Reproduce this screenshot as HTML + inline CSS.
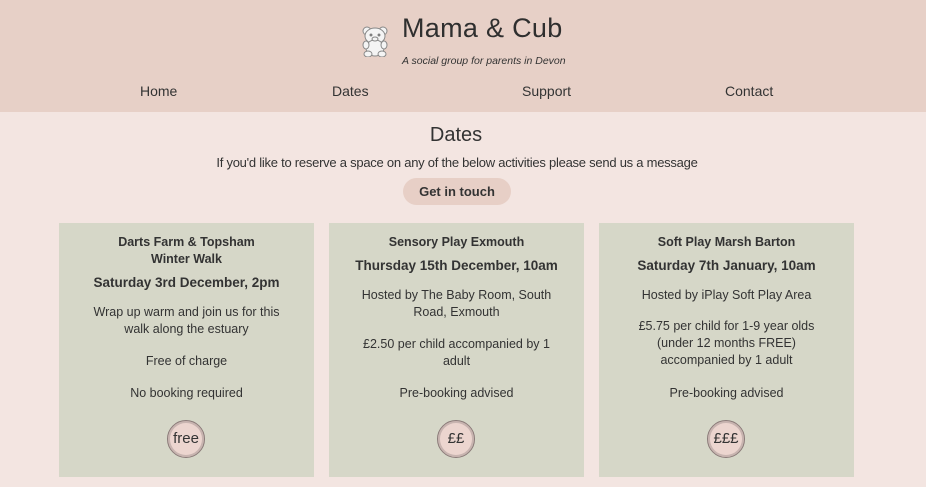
<!DOCTYPE html>
<html><head><meta charset="utf-8"><style>
*{margin:0;padding:0;box-sizing:border-box}
body{width:926px;height:487px;overflow:hidden;background:#f3e5e1;font-family:"Liberation Sans","DejaVu Sans",sans-serif;color:#333;position:relative}
.hdr{position:absolute;left:0;top:0;width:926px;height:112px;background:#e7d0c7}
.title{position:absolute;left:402px;top:13px;font-size:27px;color:#2f2f2f;font-family:"Liberation Sans",sans-serif;letter-spacing:0.3px}
.sub{position:absolute;left:402px;top:55px;font-size:10.5px;font-style:italic;color:#333}
.nav{position:absolute;top:83px;font-size:14px;color:#333}
.t{position:absolute;left:0;width:918px;text-align:center}
.btn{position:absolute;left:403px;top:178px;width:108px;height:27px;border-radius:14px;background:#e7cfc6;font-size:13px;font-weight:bold;text-align:center;line-height:27px;color:#333}
.card{position:absolute;top:223px;width:255px;height:254px;background:#d6d7c8;text-align:center;font-size:12.5px;line-height:17px;color:#333}
.card p{position:absolute;left:24px;right:24px}
.b{font-weight:bold}
.d{font-size:13.5px}
.c{position:absolute;left:108px;top:197px;width:38px;height:38px;border-radius:50%;background:#ecd5cf;border:1.5px solid #8a7a78;box-shadow:0 0 0 2px #c8b4b0 inset;font-size:15px;line-height:35px;text-align:center;color:#333}
</style></head><body>
<div class="hdr">
<svg style="position:absolute;left:361px;top:25px" width="30" height="32" viewBox="0 0 30 32" fill="#f4f4f4" stroke="#888" stroke-width="1">
<circle cx="6" cy="6" r="4"/><circle cx="22" cy="6" r="4"/>
<ellipse cx="14" cy="11" rx="10" ry="8"/>
<ellipse cx="14" cy="23" rx="9" ry="8"/>
<ellipse cx="5" cy="20" rx="3" ry="4"/><ellipse cx="23" cy="20" rx="3" ry="4"/>
<ellipse cx="7" cy="29" rx="4" ry="3"/><ellipse cx="21" cy="29" rx="4" ry="3"/>
<circle cx="10" cy="10" r="1" fill="#555"/><circle cx="18" cy="10" r="1" fill="#555"/>
<ellipse cx="14" cy="14" rx="3" ry="2"/>
</svg>
<div class="title">Mama &amp; Cub</div>
<div class="sub">A social group for parents in Devon</div>
<div class="nav" style="left:140px">Home</div>
<div class="nav" style="left:332px">Dates</div>
<div class="nav" style="left:522px">Support</div>
<div class="nav" style="left:725px">Contact</div>
</div>
<div class="t" style="top:124px;font-size:20px;left:-3px">Dates</div>
<div class="t" style="top:155px;font-size:13px;letter-spacing:-0.25px;left:-2px">If you'd like to reserve a space on any of the below activities please send us a message</div>
<div class="btn">Get in touch</div>

<div class="card" style="left:59px">
<p class="b" style="top:11px">Darts Farm &amp; Topsham<br>Winter Walk</p>
<p class="b d" style="top:51px">Saturday 3rd December, 2pm</p>
<p style="top:81px">Wrap up warm and join us for this walk along the estuary</p>
<p style="top:130px">Free of charge</p>
<p style="top:162px">No booking required</p>
<div class="c">free</div>
</div>
<div class="card" style="left:329px">
<p class="b" style="top:11px">Sensory Play Exmouth</p>
<p class="b d" style="top:34px">Thursday 15th December, 10am</p>
<p style="top:64px">Hosted by The Baby Room, South Road, Exmouth</p>
<p style="top:113px">£2.50 per child accompanied by 1 adult</p>
<p style="top:162px">Pre-booking advised</p>
<div class="c">££</div>
</div>
<div class="card" style="left:599px">
<p class="b" style="top:11px">Soft Play Marsh Barton</p>
<p class="b d" style="top:34px">Saturday 7th January, 10am</p>
<p style="top:64px">Hosted by iPlay Soft Play Area</p>
<p style="top:95px">£5.75 per child for 1-9 year olds (under 12 months FREE) accompanied by 1 adult</p>
<p style="top:162px">Pre-booking advised</p>
<div class="c">£££</div>
</div>
</body></html>
